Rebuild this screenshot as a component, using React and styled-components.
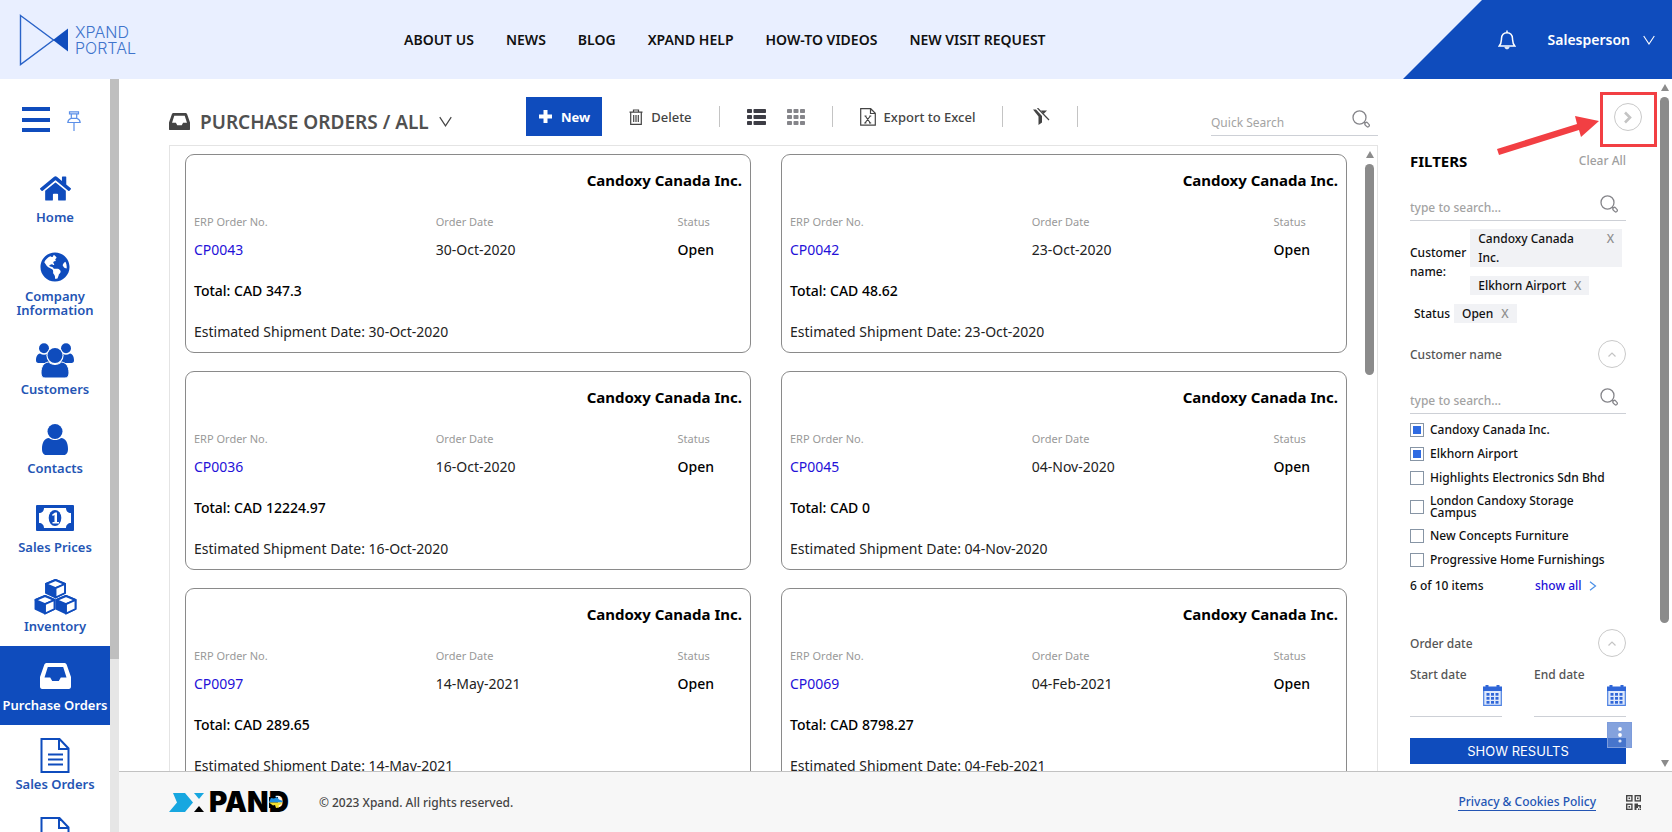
import React, { useState } from "react";
import styled, { createGlobalStyle, css } from "styled-components";
import { FaHome, FaGlobeAmericas } from "react-icons/fa";

const GlobalStyle = createGlobalStyle`
   * {
      box-sizing: border-box;
   }
   body {
      margin: 0;
      background: #fff;
      color: #222;
      font-family: "Noto Sans", "Open Sans", sans-serif;
      font-size: 13px;
   }
   button,
   input {
      font: inherit;
      color: inherit;
   }
   button {
      padding: 0;
      border: 0;
      background: none;
      cursor: pointer;
   }
   a {
      text-decoration: none;
   }
   svg {
      display: block;
      flex: none;
   }
`;

const blue = "#0f4cbd";

const Page = styled.div`
   height: 100vh;
   display: flex;
   flex-direction: column;
   overflow: hidden;
`;

/* ---------- header ---------- */

const Header = styled.header`
   flex: 0 0 79px;
   display: flex;
   align-items: center;
   background: #e9efff;
`;

const Brand = styled.a`
   flex: 0 0 404px;
   display: flex;
   align-items: center;
   gap: 6px;
   padding-left: 19px;
   color: #3f74cc;
   font-family: Inter, "Liberation Sans", sans-serif;
   font-size: 16px;
   font-weight: 300;
   line-height: 16px;

   span {
      display: block;
   }
`;

const Nav = styled.nav`
   display: flex;
   gap: 32px;
   white-space: nowrap;

   a {
      color: #111;
      font-size: 14px;
      font-weight: 600;
   }
`;

const UserArea = styled.div`
   width: 269px;
   height: 100%;
   margin-left: auto;
   padding-right: 17px;
   display: flex;
   align-items: center;
   justify-content: flex-end;
   gap: 32px;
   background: ${blue};
   color: #fff;
   clip-path: polygon(79px 0, 100% 0, 100% 100%, 0 100%);
`;

const UserButton = styled.button`
   display: flex;
   align-items: center;
   gap: 13px;
   font-size: 14px;
   font-weight: 600;
`;

/* ---------- sidebar ---------- */

const Body = styled.div`
   flex: 1;
   min-height: 0;
   display: flex;
`;

const Sidebar = styled.aside`
   flex: 0 0 119px;
   display: flex;
   overflow: hidden;
`;

const SideMenu = styled.div`
   flex: 1;
   display: flex;
   flex-direction: column;
   color: ${blue};
`;

const SideTools = styled.div`
   flex: 0 0 79px;
   display: flex;
   gap: 17px;
   padding: 28px 0 0 22px;
`;

const Burger = styled.button`
   width: 28px;
   height: 25px;
   display: flex;
   flex-direction: column;
   justify-content: space-between;

   span {
      width: 100%;
      height: 4px;
      background: ${blue};
   }
`;

const PinButton = styled.button`
   height: 20px;
   margin-top: 4px;
`;

const SideItem = styled.a`
   flex: none;
   padding: 12px 0 13px;
   display: flex;
   flex-direction: column;
   align-items: center;
   gap: 4px;
   color: ${(p) => (p.$active ? "#fff" : "#2455b4")};
   background: ${(p) => (p.$active ? blue : "transparent")};
   font-size: 13px;
   font-weight: 600;
   line-height: 14px;
   text-align: center;
`;

const SideIcon = styled.span`
   height: 36px;
   display: flex;
   align-items: center;
   color: ${(p) => (p.$active ? "#fff" : blue)};
`;

const SideScroll = styled.div`
   flex: 0 0 9px;
   background: #e6e6e6;

   div {
      height: 77%;
      background: #bfbfbf;
   }
`;

/* ---------- content ---------- */

const Content = styled.div`
   flex: 1;
   min-width: 0;
   display: flex;
   flex-direction: column;
`;

const Workspace = styled.div`
   flex: 1;
   min-height: 0;
   display: flex;
`;

const Main = styled.main`
   flex: 1;
   min-width: 0;
   padding-left: 50px;
   display: flex;
   flex-direction: column;
`;

const Toolbar = styled.div`
   flex: 0 0 66px;
   padding: 18px 0 9px;
   display: flex;
   align-items: center;
   gap: 27px;
   color: #444;
`;

const TitleButton = styled.button`
   width: 330px;
   padding-top: 10px;
   display: flex;
   align-items: center;
   gap: 10px;
   color: #444;
`;

const Title = styled.h1`
   margin: 0;
   color: #505050;
   font-size: 19px;
   font-weight: 600;
   line-height: 26px;
   white-space: nowrap;
`;

const NewButton = styled.button`
   height: 39px;
   padding: 0 12px;
   display: flex;
   align-items: center;
   gap: 8px;
   background: ${blue};
   color: #fff;
   font-weight: 700;
`;

const ToolButton = styled.button`
   display: flex;
   align-items: center;
   gap: 8px;
   font-weight: 500;
   white-space: nowrap;
`;

const ViewSwitch = styled.div`
   display: flex;
   gap: 21px;
`;

const Divider = styled.span`
   width: 1px;
   height: 21px;
   background: #c4c4c4;
`;

const SearchBox = styled.label`
   height: 26px;
   display: flex;
   align-items: center;
   justify-content: space-between;
   border-bottom: 1px solid #cdd0d6;
   color: #999;
   font-size: 12px;

   svg {
      margin: 0 8px 8px 0;
   }
   ${(p) =>
      p.$quick &&
      css`
         width: 167px;
         margin-left: auto;
         align-self: flex-end;
      `}
`;

const SearchInput = styled.input`
   flex: 1;
   min-width: 0;
   padding: 0;
   border: 0;
   outline: 0;
   background: none;

   &::placeholder {
      color: #a3a3a3;
      opacity: 1;
   }
`;

const ListPanel = styled.section`
   flex: 1;
   min-height: 0;
   display: flex;
   gap: 18px;
   padding: 0 3px 0 15px;
   border: 1px solid #e4e4e4;
   border-bottom: 0;
   overflow: hidden;
`;

const CardGrid = styled.div`
   flex: 1;
   padding-top: 8px;
   display: grid;
   grid-template-columns: 1fr 1fr;
   grid-auto-rows: max-content;
   gap: 18px 30px;
`;

const Card = styled.article`
   padding: 14px 8px 8px;
   border: 1px solid #8a8a8a;
   border-radius: 9px;
   font-size: 14px;
   line-height: 24px;
`;

const CardTitle = styled.h2`
   margin: 0 0 20px;
   color: #000;
   font-size: 15px;
   font-weight: 700;
   line-height: 23px;
   text-align: right;
`;

const CardFields = styled.dl`
   margin: 0;
   display: grid;
   grid-template-columns: 15fr 15fr 4fr;

   dt {
      margin-bottom: 6px;
      color: #999;
      font-size: 11px;
      line-height: 20px;
   }
   dd {
      margin: 0;
   }
   a {
      color: #2410d8;
   }
`;

const CardLine = styled.p`
   margin: 17px 0 0;
   font-weight: ${(p) => (p.$strong ? 500 : 400)};
   color: ${(p) => (p.$strong ? "#000" : "#222")};
`;

const Strong = styled.span`
   color: #000;
   font-weight: 500;
`;

/* ---------- scrollbars ---------- */

const ScrollColumn = styled.div`
   flex: 0 0 9px;
   padding: 5px 0 4px;
   display: flex;
   flex-direction: column;
   align-items: center;
   gap: 6px;
`;

const ScrollTrack = styled.div`
   flex: 1;
   width: 100%;

   div {
      height: ${(p) => p.$size}%;
      border-radius: 5px;
      background: #8b8b8b;
   }
`;

const ScrollArrow = styled.span`
   border: 4px solid transparent;
   ${(p) =>
      p.$down
         ? "border-top: 7px solid #8b8b8b; border-bottom: 0;"
         : "border-bottom: 7px solid #8b8b8b; border-top: 0;"}
`;

/* ---------- filters ---------- */

const Filters = styled.aside`
   flex: 0 0 294px;
   padding-right: 3px;
   display: flex;
   overflow: hidden;
`;

const FilterForm = styled.form`
   flex: 1;
   min-width: 0;
   padding: 24px 34px 0 32px;
   color: #111;
   font-size: 12px;
   font-weight: 500;
`;

const CollapseRow = styled.div`
   margin-right: -16px;
   display: flex;
   justify-content: flex-end;
`;

const CircleButton = styled.button`
   width: 28px;
   height: 28px;
   display: flex;
   align-items: center;
   justify-content: center;
   border: 1px solid #c9c9c9;
   border-radius: 50%;
   color: #c4c4c4;
`;

const Callout = styled.div`
   position: relative;
   display: flex;

   &::after {
      content: "";
      position: absolute;
      inset: -11px -15px -16px -14px;
      border: 3px solid #f23f43;
      pointer-events: none;
   }
   > svg {
      position: absolute;
      top: 11px;
      right: 42px;
      pointer-events: none;
   }
`;

const FilterHead = styled.div`
   margin: 20px 0 24px;
   display: flex;
   align-items: center;
   justify-content: space-between;
   line-height: 20px;

   h2 {
      margin: 0;
      color: #000;
      font-size: 15px;
      font-weight: 700;
   }
   button {
      color: #a0a0a0;
   }
`;

const TagRow = styled.div`
   margin-top: ${(p) => (p.$first ? 8 : 9)}px;
   padding-left: ${(p) => (p.$first ? 0 : 4)}px;
   display: flex;
   align-items: center;
   gap: 4px;
   line-height: 19px;
`;

const TagLabel = styled.span`
   ${(p) => p.$wide && "flex: 0 0 56px;"}
`;

const Tags = styled.div`
   flex: 1;
   display: flex;
   flex-direction: column;
   align-items: flex-start;
   gap: 9px;
   padding-right: 4px;
`;

const Tag = styled.span`
   ${(p) => p.$wide && "width: 100%;"}
   display: flex;
   align-items: flex-start;
   justify-content: space-between;
   gap: ${(p) => (p.$wide ? 24 : 8)}px;
   padding: 0 8px;
   background: #f1f2f5;

   button {
      color: #8f8f8f;
      line-height: 19px;
   }
`;

const SectionHead = styled.div`
   margin: ${(p) => p.$top}px 0 ${(p) => p.$bottom}px;
   display: flex;
   align-items: center;
   justify-content: space-between;
   color: #555;

   h3 {
      margin: 0;
      font-size: 12px;
      font-weight: 500;
   }
`;

const CheckList = styled.div`
   margin: 9px 0;
   padding-right: 12px;
   display: flex;
   flex-direction: column;
   gap: 10px;
`;

const CheckRow = styled.label`
   min-height: 14px;
   display: flex;
   align-items: center;
   gap: 6px;
   line-height: 12px;

   input {
      appearance: none;
      flex: none;
      width: 14px;
      height: 14px;
      margin: 0;
      padding: 2px;
      border: 1px solid #8795a5;
   }
   input:checked {
      background: #2f6be2 content-box;
   }
`;

const CountRow = styled.div`
   display: flex;
   line-height: 20px;

   span {
      flex: 0 0 125px;
   }
   a {
      display: flex;
      align-items: center;
      gap: 7px;
      color: #2410d8;
   }
`;

const DateRow = styled.div`
   margin-bottom: 21px;
   display: grid;
   grid-template-columns: 1fr 1fr;
   gap: 32px;
`;

const DateField = styled.div`
   min-width: 0;
   color: #555;
   line-height: 18px;

   label {
      display: block;
   }
   div {
      height: 33px;
      display: flex;
      border-bottom: 1px solid #cdd0d6;
   }
   input {
      flex: 1;
      min-width: 0;
      border: 0;
      outline: 0;
      background: none;
   }
   button {
      height: 22px;
   }
`;

const ResultsWrap = styled.div`
   position: relative;
`;

const ResultsButton = styled.button`
   width: 100%;
   height: 26px;
   background: ${blue};
   color: #fff;
   font-family: Inter, "Liberation Sans", sans-serif;
   font-size: 13px;
   font-weight: 400;
`;

const FloatingMenu = styled.button`
   position: absolute;
   top: -16px;
   right: -6px;
   width: 25px;
   height: 26px;
   display: flex;
   align-items: center;
   justify-content: center;
   background: rgba(91, 131, 209, 0.75);
   border: 1px solid #7d9cdb;
`;

/* ---------- footer ---------- */

const Footer = styled.footer`
   flex: 0 0 61px;
   padding: 0 31px 0 50px;
   display: flex;
   align-items: center;
   gap: 30px;
   border-top: 1px solid #c2c2c2;
   background: #f7f7f7;
   color: #444;
   font-size: 12px;
   font-weight: 500;

   a {
      margin-left: auto;
      border-bottom: 1px solid #2455b4;
      color: #2455b4;
   }
`;

const FooterLogo = styled.div`
   position: relative;
   display: flex;
   align-items: center;
   gap: 4px;
   color: #000;
   font-family: Inter, "Liberation Sans", sans-serif;
   font-size: 28px;
   font-weight: 900;
   line-height: 20px;

   > svg:last-child {
      position: absolute;
      right: 5px;
      top: 5px;
   }
`;

/* ---------- icons ---------- */

const LogoIcon = () => (
   <svg width="50" height="52" viewBox="0 0 50 52">
      <path d="M1.5 1.5 34.5 26 1.5 50.5Z" fill="none" stroke="#2a63c8" strokeWidth="1.4" />
      <path d="M34 26 49 14.5v23Z" fill={blue} />
   </svg>
);

const BellIcon = () => (
   <svg width="18" height="20" viewBox="0 0 18 20" fill="none" stroke="currentColor" strokeWidth="1.5">
      <path d="M1.2 16C3.5 13.600 3.300 12 3.500 8.500 3.700 5 5.700 2.700 9 2.700s5.300 2.300 5.500 5.800c.2 3.500 0 5.100 2.300 7.500Z" />
      <path d="M9 2.700V.6" />
      <path d="M6.800 17.200h4.400c-.3 2.300-4.100 2.300-4.400 0Z" fill="currentColor" strokeWidth=".6" />
   </svg>
);

const ChevronDown = ({ size = 12 }) => (
   <svg width={size} height={size - 2} viewBox="0 0 12 10" fill="none" stroke="currentColor" strokeWidth="1.1">
      <path d="M.7 1 6 9l5.300-8" />
   </svg>
);

const PinIcon = () => (
   <svg width="14" height="20" viewBox="0 0 14 20" fill="none" stroke="#5b8fe8" strokeWidth="1.2">
      <path d="M2.500.8h9v2h-9zM4.300 2.800v4.500C2.300 8 1 9.300.8 11.500h12.400C13 9.300 11.700 8 9.700 7.300V2.800M4.300 7.300h5.400M7 11.500V20" />
   </svg>
);

const PeopleIcon = () => (
   <svg width="38" height="35" viewBox="0 0 38 35" fill="currentColor">
      <circle cx="8" cy="5.200" r="5" />
      <circle cx="30" cy="5.200" r="5" />
      <path d="M4 10.500c2.400 1.700 5.400 1.700 7.500.3-.6 4 .6 7.200 3 9.200H2.500C.8 20 0 19 0 17.200c0-3.400 1.300-6.300 4-6.700ZM34 10.500c-2.400 1.700-5.400 1.700-7.500.3.6 4-.6 7.200-3 9.200h12c1.700 0 2.500-1 2.500-2.800 0-3.400-1.300-6.300-4-6.700Z" />
      <circle cx="19" cy="12.500" r="8.600" fill="#fff" />
      <circle cx="19" cy="12.500" r="7.500" />
      <path d="M12.500 19c4 3.300 9 3.300 13 0 5.200.6 7.500 5 7.500 11 0 3-1.400 5-4 5H9c-2.600 0-4-2-4-5 0-6 2.300-10.400 7.500-11Z" stroke="#fff" />
   </svg>
);

const PersonIcon = () => (
   <svg width="26" height="31" viewBox="0 0 26 31" fill="currentColor">
      <circle cx="13" cy="7.500" r="7.500" />
      <path d="M7 14c3.600 2.800 8.400 2.800 12 0 4.800.5 7 4.700 7 11 0 3.500-1.500 6-4 6H4c-2.500 0-4-2.500-4-6 0-6.300 2.200-10.500 7-11Z" />
   </svg>
);

const MoneyIcon = () => (
   <svg width="38" height="26" viewBox="0 0 38 26" fill="currentColor">
      <path
         fillRule="evenodd"
         d="M1 0h36a1 1 0 0 1 1 1v24a1 1 0 0 1-1 1H1a1 1 0 0 1-1-1V1a1 1 0 0 1 1-1ZM8 3C8 6 6 8 3 8v10c3 0 5 2 5 5h22c0-3 2-5 5-5V8c-3 0-5-2-5-5Z"
      />
      <ellipse cx="19" cy="13" rx="6.300" ry="8" />
      <path d="M16 9.800 19 7.500h2V17h2v1.500h-6.500V17h2v-7L16.800 11Z" fill="#fff" />
   </svg>
);

const Cube = ({ x, y }) => (
   <g transform={`translate(${x} ${y})`} stroke="currentColor" strokeWidth="1.900" strokeLinejoin="round">
      <path d="M10.500 1 20 5v9l-9.500 4.500L1 14V5Z" fill="currentColor" />
      <path d="M10.500 1 20 5l-9.500 4.200L1 5Z" fill="#fff" />
      <path d="M10.500 9.200 20 5v9l-9.500 4.500Z" fill="#fff" />
   </g>
);

const CubesIcon = () => (
   <svg width="43" height="36" viewBox="0 0 43 36">
      <Cube x={11} y={0} />
      <Cube x={0.5} y={16} />
      <Cube x={21.5} y={16} />
   </svg>
);

const TrayIcon = ({ width = 31 }) => (
   <svg width={width} height={width * 0.84} viewBox="0 0 31 26" fill="currentColor">
      <path
         fillRule="evenodd"
         d="M7 0h17c1.400 0 2.300.6 2.800 2L31 14v9.500c0 1.600-.9 2.500-2.500 2.500h-26C.9 26 0 25.100 0 23.500V14L4.200 2C4.700.6 5.600 0 7 0Zm.8 4L4.500 14.500h5.700l2 3.500h6.600l2-3.500h5.700L23.200 4Z"
      />
   </svg>
);

const DocIcon = () => (
   <svg width="30" height="35" viewBox="0 0 30 35" fill="none" stroke="currentColor" strokeWidth="2">
      <path d="M1.500 1h18l9 9.500V34h-27ZM19 1v10h9.500M8 16.500h15M8 21.500h15M8 26.500h15" />
   </svg>
);

const PlusIcon = () => (
   <svg width="15" height="15" viewBox="0 0 15 15" fill="currentColor">
      <path d="M5.500 1h4v4.500H14v4H9.500V14h-4V9.500H1v-4h4.500Z" />
   </svg>
);

const TrashIcon = () => (
   <svg width="14" height="16" viewBox="0 0 14 16" fill="none" stroke="currentColor" strokeWidth="1.200">
      <path d="M.5 3.200h13M4.500 3V1h5v2M1.700 3.500v11.900h10.600V3.500M4.700 6v7M7 6v7M9.300 6v7" />
   </svg>
);

const ListIcon = () => (
   <svg width="19" height="16" viewBox="0 0 19 16" fill="#3d3d45">
      {[0, 6, 12].map((y) => (
         <React.Fragment key={y}>
            <rect y={y} width="5" height="4" rx=".8" />
            <rect x="6.500" y={y} width="12.500" height="4" rx=".8" />
         </React.Fragment>
      ))}
   </svg>
);

const GridIcon = () => (
   <svg width="18" height="16" viewBox="0 0 18 16" fill="#85858a">
      {[0, 6, 12].map((y) =>
         [0, 6.5, 13].map((x) => <rect key={`${x}-${y}`} x={x} y={y} width="5" height="4" rx=".8" />)
      )}
   </svg>
);

const ExcelIcon = () => (
   <svg width="16" height="18" viewBox="0 0 16 18" fill="none" stroke="currentColor" strokeWidth="1.200">
      <path d="M.7.700h10l4.600 4.500v12H.7ZM10.500.8v4.700h4.700" />
      <path d="M5.300 8l5 7M10.300 8l-5.300 7M4.500 8h2M9.300 8h2M4.200 15h2.200M9 15h2.200" />
   </svg>
);

const FilterOffIcon = () => (
   <svg width="20" height="17" viewBox="0 0 20 17" fill="currentColor">
      <path d="M3 1.500h3l6 6.500v6.500L8.500 17V8.500Z" />
      <path d="M11 2.500h6L13.500 6Z" />
      <path d="M7.500 0 19 12" stroke="currentColor" strokeWidth="1.200" />
   </svg>
);

const SearchIcon = () => (
   <svg width="18" height="18" viewBox="0 0 18 18" fill="none" stroke="#85858a">
      <ellipse cx="7.500" cy="7.500" rx="6.500" ry="6.700" strokeWidth="1.300" />
      <path d="m12 12 1.500 1.200" strokeWidth="1.300" />
      <rect x="-1" y="-1.700" width="5" height="3.200" rx="1.500" transform="translate(14 13.600) rotate(48)" strokeWidth="1.200" />
   </svg>
);

const ArrowMark = () => (
   <svg width="104" height="44" viewBox="0 0 104 44" fill="#f23f43">
      <path d="M1 35 81 10 79 2l24 5-18 16-2-7L3 41Z" />
   </svg>
);

const ChevronRight = () => (
   <svg width="8" height="13" viewBox="0 0 8 13" fill="none" stroke="currentColor" strokeWidth="2.600">
      <path d="M1 1.500 6 6.500l-5 5" />
   </svg>
);

const ChevronUp = () => (
   <svg width="8" height="5" viewBox="0 0 8 5" fill="none" stroke="currentColor" strokeWidth="1.200">
      <path d="M.5 4.500 4 1l3.500 3.500" />
   </svg>
);

const SmallChevron = () => (
   <svg width="8" height="10" viewBox="0 0 8 10" fill="none" stroke="#4a90e8" strokeWidth="1.200">
      <path d="M1 .8 6.500 5 1 9.200" />
   </svg>
);

const CalendarIcon = () => (
   <svg width="19" height="21" viewBox="0 0 19 21">
      <path d="M.7 2.500h17.600v17.800H.7Z" fill="#dfe9fb" stroke="#4c80e2" strokeWidth="1.200" />
      <path d="M0 1.500h2.500V0h3v1.500h8V0h3v1.500H19V6H0Z" fill="#2f66d8" />
      {[8, 12, 16].map((y) =>
         [3.5, 8, 12.5].map((x) => <rect key={`${x}-${y}`} x={x} y={y} width="3" height="2.700" fill="#2f66d8" />)
      )}
   </svg>
);

const DotsIcon = () => (
   <svg width="4" height="16" viewBox="0 0 4 16" fill="#fff">
      <circle cx="2" cy="2" r="1.900" />
      <circle cx="2" cy="8" r="1.900" />
      <circle cx="2" cy="14" r="1.600" opacity=".8" />
   </svg>
);

const QrIcon = () => (
   <svg width="15" height="15" viewBox="0 0 15 15" fill="#444">
      {[
         [0, 0],
         [8.5, 0],
         [0, 8.5],
      ].map(([x, y]) => (
         <g key={`${x}-${y}`}>
            <rect x={x + 0.7} y={y + 0.7} width="5.200" height="5.200" fill="none" stroke="#444" strokeWidth="1.400" />
            <rect x={x + 2.5} y={y + 2.5} width="1.600" height="1.600" />
         </g>
      ))}
      <path d="M8.500 8.500H12V10h3v3h-1.500v-1.500H12V13h-1.500v2h-2ZM12 13.500h1.300V15H12ZM13.800 13.500H15V15h-1.200Z" />
   </svg>
);

const XMark = () => (
   <svg width="36" height="19" viewBox="0 0 36 19">
      <path d="M4 0h12l8 9.500L16 19H0l8-9.500Z" fill="#17a7e0" />
      <path d="M25 0h10l-5 6Z" fill="#17a7e0" />
      <path d="M25 19h10l-5-6Z" fill="#000" />
   </svg>
);

const UkraineMark = () => (
   <svg width="15" height="11" viewBox="0 0 15 11">
      <path d="M0 0h9v11H0Z" fill="#000" />
      <path d="M0 5 2 1l3 .5L8 0l2 2.500 4 1.500-1 1.500H0Z" fill="#1f8fe0" />
      <path d="M0 5.500h13.500L11 8 9.500 8.500 10 10.500l-3 .5L6 8 4 8.500 2 7Z" fill="#f5e02c" />
   </svg>
);

/* ---------- data ---------- */

const navLinks = ["ABOUT US", "NEWS", "BLOG", "XPAND HELP", "HOW-TO VIDEOS", "NEW VISIT REQUEST"];

const sideItems = [
   { label: "Home", icon: <FaHome size={31} /> },
   { label: "Company Information", icon: <FaGlobeAmericas size={30} /> },
   { label: "Customers", icon: <PeopleIcon /> },
   { label: "Contacts", icon: <PersonIcon /> },
   { label: "Sales Prices", icon: <MoneyIcon /> },
   { label: "Inventory", icon: <CubesIcon /> },
   { label: "Purchase Orders", icon: <TrayIcon />, active: true },
   { label: "Sales Orders", icon: <DocIcon /> },
   { icon: <DocIcon /> },
];

const orders = [
   { no: "CP0043", date: "30-Oct-2020", total: "347.3" },
   { no: "CP0042", date: "23-Oct-2020", total: "48.62" },
   { no: "CP0036", date: "16-Oct-2020", total: "12224.97" },
   { no: "CP0045", date: "04-Nov-2020", total: "0" },
   { no: "CP0097", date: "14-May-2021", total: "289.65" },
   { no: "CP0069", date: "04-Feb-2021", total: "8798.27" },
];

const customers = [
   "Candoxy Canada Inc.",
   "Elkhorn Airport",
   "Highlights Electronics Sdn Bhd",
   "London Candoxy Storage Campus",
   "New Concepts Furniture",
   "Progressive Home Furnishings",
];

/* ---------- components ---------- */

const Scrollbar = ({ size, down }) => (
   <ScrollColumn aria-hidden="true">
      <ScrollArrow />
      <ScrollTrack $size={size}>
         <div />
      </ScrollTrack>
      {down && <ScrollArrow $down />}
   </ScrollColumn>
);

const OrderCard = ({ order }) => (
   <Card>
      <CardTitle>Candoxy Canada Inc.</CardTitle>
      <CardFields>
         <dt>ERP Order No.</dt>
         <dt>Order Date</dt>
         <dt>Status</dt>
         <dd>
            <a href={`#${order.no}`}>{order.no}</a>
         </dd>
         <dd>{order.date}</dd>
         <dd>
            <Strong>Open</Strong>
         </dd>
      </CardFields>
      <CardLine $strong>Total: CAD {order.total}</CardLine>
      <CardLine>Estimated Shipment Date: {order.date}</CardLine>
   </Card>
);

const FilterTag = ({ wide, children }) => (
   <Tag $wide={wide}>
      <span>{children}</span>
      <button type="button" aria-label={`Remove ${children}`}>
         X
      </button>
   </Tag>
);

const FilterSearch = () => (
   <SearchBox>
      <SearchInput type="text" placeholder="type to search..." aria-label="type to search" />
      <SearchIcon />
   </SearchBox>
);

const FilterPanel = () => {
   const [checked, setChecked] = useState(["Candoxy Canada Inc.", "Elkhorn Airport"]);

   const toggle = (name) =>
      setChecked(checked.includes(name) ? checked.filter((c) => c !== name) : [...checked, name]);

   return (
      <Filters>
         <FilterForm onSubmit={(e) => e.preventDefault()}>
            <CollapseRow>
               <Callout>
                  <ArrowMark />
                  <CircleButton type="button" aria-label="Collapse filters">
                     <ChevronRight />
                  </CircleButton>
               </Callout>
            </CollapseRow>

            <FilterHead>
               <h2>FILTERS</h2>
               <button type="button">Clear All</button>
            </FilterHead>

            <FilterSearch />

            <TagRow $first>
               <TagLabel $wide>Customer name:</TagLabel>
               <Tags>
                  <FilterTag wide>Candoxy Canada Inc.</FilterTag>
                  <FilterTag>Elkhorn Airport</FilterTag>
               </Tags>
            </TagRow>
            <TagRow>
               <TagLabel>Status</TagLabel>
               <FilterTag>Open</FilterTag>
            </TagRow>

            <SectionHead $top={17} $bottom={20}>
               <h3>Customer name</h3>
               <CircleButton type="button" aria-label="Collapse customer name">
                  <ChevronUp />
               </CircleButton>
            </SectionHead>
            <FilterSearch />
            <CheckList>
               {customers.map((name) => (
                  <CheckRow key={name}>
                     <input type="checkbox" checked={checked.includes(name)} onChange={() => toggle(name)} />
                     {name}
                  </CheckRow>
               ))}
            </CheckList>
            <CountRow>
               <span>6 of 10 items</span>
               <a href="#all">
                  show all <SmallChevron />
               </a>
            </CountRow>

            <SectionHead $top={33} $bottom={9}>
               <h3>Order date</h3>
               <CircleButton type="button" aria-label="Collapse order date">
                  <ChevronUp />
               </CircleButton>
            </SectionHead>
            <DateRow>
               {["Start date", "End date"].map((label) => (
                  <DateField key={label}>
                     <label htmlFor={label}>{label}</label>
                     <div>
                        <input id={label} type="text" />
                        <button type="button" aria-label={`Pick ${label}`}>
                           <CalendarIcon />
                        </button>
                     </div>
                  </DateField>
               ))}
            </DateRow>

            <ResultsWrap>
               <ResultsButton type="submit">SHOW RESULTS</ResultsButton>
               <FloatingMenu type="button" aria-label="More options">
                  <DotsIcon />
               </FloatingMenu>
            </ResultsWrap>
         </FilterForm>
         <Scrollbar size={80} down />
      </Filters>
   );
};

const App = () => (
   <Page>
      <GlobalStyle />
      <Header>
         <Brand href="#home">
            <LogoIcon />
            <div>
               <span>XPAND</span>
               <span>PORTAL</span>
            </div>
         </Brand>
         <Nav>
            {navLinks.map((link) => (
               <a key={link} href="#nav">
                  {link}
               </a>
            ))}
         </Nav>
         <UserArea>
            <button type="button" aria-label="Notifications">
               <BellIcon />
            </button>
            <UserButton type="button">
               Salesperson <ChevronDown />
            </UserButton>
         </UserArea>
      </Header>

      <Body>
         <Sidebar>
            <SideMenu>
               <SideTools>
                  <Burger type="button" aria-label="Menu">
                     <span />
                     <span />
                     <span />
                  </Burger>
                  <PinButton type="button" aria-label="Pin menu">
                     <PinIcon />
                  </PinButton>
               </SideTools>
               {sideItems.map(({ label, icon, active }, i) => (
                  <SideItem key={i} href="#menu" $active={active}>
                     <SideIcon $active={active}>{icon}</SideIcon>
                     {label}
                  </SideItem>
               ))}
            </SideMenu>
            <SideScroll aria-hidden="true">
               <div />
            </SideScroll>
         </Sidebar>

         <Content>
            <Workspace>
               <Main>
                  <Toolbar>
                     <TitleButton type="button">
                        <TrayIcon width={21} />
                        <Title>PURCHASE ORDERS / ALL</Title>
                        <ChevronDown size={13} />
                     </TitleButton>
                     <NewButton type="button">
                        <PlusIcon /> New
                     </NewButton>
                     <ToolButton type="button">
                        <TrashIcon /> Delete
                     </ToolButton>
                     <Divider />
                     <ViewSwitch>
                        <button type="button" aria-label="List view">
                           <ListIcon />
                        </button>
                        <button type="button" aria-label="Grid view">
                           <GridIcon />
                        </button>
                     </ViewSwitch>
                     <Divider />
                     <ToolButton type="button">
                        <ExcelIcon /> Export to Excel
                     </ToolButton>
                     <Divider />
                     <ToolButton type="button" aria-label="Clear filter">
                        <FilterOffIcon />
                     </ToolButton>
                     <Divider />
                     <SearchBox $quick>
                        <SearchInput type="text" placeholder="Quick Search" aria-label="Quick Search" />
                        <SearchIcon />
                     </SearchBox>
                  </Toolbar>
                  <ListPanel>
                     <CardGrid>
                        {orders.map((order) => (
                           <OrderCard key={order.no} order={order} />
                        ))}
                     </CardGrid>
                     <Scrollbar size={35} />
                  </ListPanel>
               </Main>
               <FilterPanel />
            </Workspace>

            <Footer>
               <FooterLogo>
                  <XMark />
                  PAND
                  <UkraineMark />
               </FooterLogo>
               <span>© 2023 Xpand. All rights reserved.</span>
               <a href="#privacy">Privacy &amp; Cookies Policy</a>
               <QrIcon />
            </Footer>
         </Content>
      </Body>
   </Page>
);

export default App;
